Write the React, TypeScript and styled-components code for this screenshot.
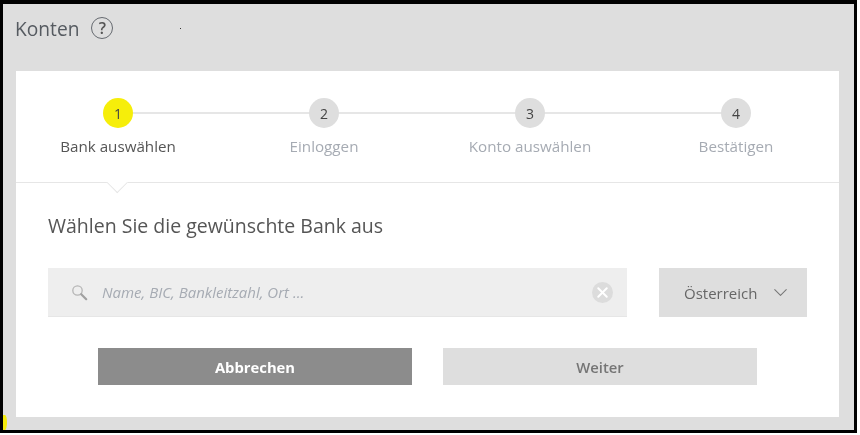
import React from "react";
import styled, { createGlobalStyle } from "styled-components";
import { ChevronDown, X } from "lucide-react";

const steps = ["Bank auswählen", "Einloggen", "Konto auswählen", "Bestätigen"];

const GlobalStyle = createGlobalStyle`
  html, body {
    margin: 0;
    padding: 0;
    background: #ffffff;
  }
  body {
    font-family: "Open Sans", "Liberation Sans", sans-serif;
  }
`;

const Frame = styled.div`
  position: relative;
  box-sizing: border-box;
  width: 857px;
  height: 433px;
  border: solid #000000;
  border-width: 4px 3px 3px 3px;
  background: #dedede;
  padding: 0 15px 13px 13px;
  display: flex;
  flex-direction: column;
  filter: blur(0.4px);
`;

const Speck = styled.i`
  position: absolute;
  left: 177px;
  top: 24px;
  width: 1px;
  height: 1px;
  background: #333333;
`;

const YellowMark = styled.i`
  position: absolute;
  left: 0;
  top: 411px;
  width: 4px;
  height: 15px;
  border-radius: 0 50% 50% 0;
  background: #f4ec0c;
`;

const Header = styled.header`
  height: 67px;
  flex: none;
  margin-left: -1px;
  padding-bottom: 19px;
  box-sizing: border-box;
  display: flex;
  align-items: center;
  gap: 12px;
`;

const Title = styled.h1`
  margin: 0;
  font-size: 19.2px;
  font-weight: 400;
  color: #555a60;
`;

const HelpIcon = styled.span`
  box-sizing: border-box;
  width: 22px;
  height: 22px;
  border: 1.5px solid #666a70;
  border-radius: 50%;
  display: flex;
  align-items: center;
  justify-content: center;
  font-size: 16px;
  font-weight: 600;
  color: #555555;
`;

const Card = styled.main`
  flex: 1;
  background: #ffffff;
  display: flex;
  flex-direction: column;
`;

const Stepper = styled.ol`
  position: relative;
  list-style: none;
  margin: 0;
  padding: 27px 0 0;
  height: 84px;
  display: flex;
  border-bottom: 1.5px solid #e6e6e6;
`;

const Step = styled.li<{ $first?: boolean }>`
  width: 206px;
  margin-left: ${(p) => (p.$first ? "-1px" : "0")};
  display: flex;
  flex-direction: column;
  align-items: center;
  gap: 8px;
  position: relative;
  &:not(:last-of-type)::after {
    content: "";
    position: absolute;
    top: 14px;
    left: 50%;
    width: 206px;
    height: 2px;
    background: #e6e6e6;
  }
`;

const Bubble = styled.span<{ $active?: boolean }>`
  position: relative;
  z-index: 1;
  width: 30px;
  height: 30px;
  border-radius: 50%;
  background: ${(p) => (p.$active ? "#f6ee0a" : "#dedede")};
  color: #444444;
  font-size: 14px;
  font-weight: 500;
  display: flex;
  align-items: center;
  justify-content: center;
`;

const StepLabel = styled.span<{ $active?: boolean }>`
  font-size: 15.2px;
  line-height: 20px;
  white-space: nowrap;
  color: ${(p) => (p.$active ? "#555555" : "#a6abb3")};
`;

const Notch = styled.span`
  position: absolute;
  left: 94px;
  bottom: -7px;
  box-sizing: border-box;
  width: 14.5px;
  height: 14.5px;
  background: #ffffff;
  border-right: 1.5px solid #e6e6e6;
  border-bottom: 1.5px solid #e6e6e6;
  transform: rotate(45deg);
`;

const Body = styled.section`
  padding: 30px 32px 0;
`;

const Heading = styled.h2`
  margin: 0 0 29px;
  font-size: 19.5px;
  line-height: 26px;
  font-weight: 400;
  color: #555555;
`;

const SearchRow = styled.div`
  display: flex;
  gap: 32px;
`;

const SearchBox = styled.div`
  box-sizing: border-box;
  width: 579px;
  height: 49px;
  background: #eeeeee;
  border-bottom: 1.5px solid #e6e6e6;
  padding: 0 14px 0 23px;
  display: flex;
  align-items: center;
  gap: 14px;
`;

const Placeholder = styled.span`
  flex: 1;
  font-size: 15px;
  font-style: italic;
  color: #a6abb3;
`;

const ClearButton = styled.span`
  width: 21px;
  height: 21px;
  border-radius: 50%;
  background: #dcdcdc;
  color: #ffffff;
  display: flex;
  align-items: center;
  justify-content: center;
`;

const CountrySelect = styled.div`
  box-sizing: border-box;
  width: 148px;
  height: 49px;
  background: #dedede;
  padding-left: 25px;
  display: flex;
  align-items: center;
  gap: 12px;
  font-size: 15px;
  color: #666666;
`;

const Actions = styled.div`
  margin-top: 31px;
  padding-left: 50px;
  display: flex;
  gap: 31px;
`;

const ActionButton = styled.button<{ $primary?: boolean }>`
  width: 314px;
  height: 37px;
  border: 0;
  padding: 0;
  font-family: inherit;
  font-size: 14.8px;
  font-weight: ${(p) => (p.$primary ? 700 : 600)};
  background: ${(p) => (p.$primary ? "#8c8c8c" : "#dedede")};
  color: ${(p) => (p.$primary ? "#ffffff" : "#757575")};
`;

const SearchGlyph = () => (
  <svg width="17" height="17" viewBox="0 0 17 17" fill="none">
    <circle cx="6.5" cy="6.5" r="4.7" stroke="#b5b5b5" strokeWidth="1.3" />
    <path d="M10.2 10.2 L15.2 15.2" stroke="#a0a0a0" strokeWidth="2.2" strokeLinecap="round" />
  </svg>
);

export default function App() {
  return (
    <>
      <GlobalStyle />
      <Frame>
        <Speck />
        <YellowMark />
        <Header>
          <Title>Konten</Title>
          <HelpIcon>?</HelpIcon>
        </Header>
        <Card>
          <Stepper>
            {steps.map((label, index) => (
              <Step key={label} $first={index === 0}>
                <Bubble $active={index === 0}>{index + 1}</Bubble>
                <StepLabel $active={index === 0}>{label}</StepLabel>
              </Step>
            ))}
            <Notch />
          </Stepper>
          <Body>
            <Heading>Wählen Sie die gewünschte Bank aus</Heading>
            <SearchRow>
              <SearchBox>
                <SearchGlyph />
                <Placeholder>Name, BIC, Bankleitzahl, Ort ...</Placeholder>
                <ClearButton>
                  <X size={17} strokeWidth={2.8} />
                </ClearButton>
              </SearchBox>
              <CountrySelect>
                Österreich
                <ChevronDown size={23} strokeWidth={1.1} color="#777777" />
              </CountrySelect>
            </SearchRow>
            <Actions>
              <ActionButton $primary>Abbrechen</ActionButton>
              <ActionButton>Weiter</ActionButton>
            </Actions>
          </Body>
        </Card>
      </Frame>
    </>
  );
}
